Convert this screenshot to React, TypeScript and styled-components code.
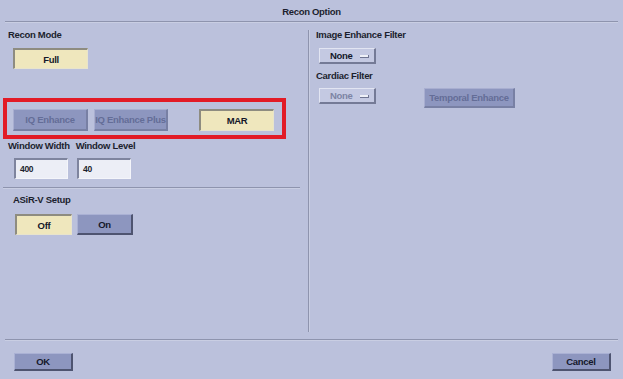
import styled, { createGlobalStyle } from "styled-components";

const GlobalStyle = createGlobalStyle`
  html, body {
    margin: 0;
    padding: 0;
    background: #bbc1dc;
  }
  * {
    box-sizing: border-box;
  }
`;

const Window = styled.div`
  width: 623px;
  height: 379px;
  display: flex;
  flex-direction: column;
  background: #bbc1dc;
  font-family: "Liberation Sans", Arial, sans-serif;
  font-size: 9.5px;
  letter-spacing: -0.3px;
  font-weight: bold;
  color: #1c1f2e;
  overflow: hidden;
`;

const TitleBar = styled.div`
  height: 21px;
  display: flex;
  align-items: center;
  justify-content: center;
  padding-top: 1px;
`;

const Rule = styled.div<{ $inset?: string }>`
  height: 2px;
  margin: ${(p) => p.$inset || "0 5px"};
  background: #8e94ae;
  border-bottom: 1px solid #c9cee3;
`;

const Body = styled.div`
  height: 316px;
  display: flex;
`;

const LeftColumn = styled.div`
  width: 308px;
  display: flex;
  flex-direction: column;
`;

const RightColumn = styled.div`
  flex: 1;
  display: flex;
  flex-direction: column;
  padding-left: 4px;
`;

const Divider = styled.div`
  width: 2px;
  margin: 7px 0;
  background: #8e94ae;
  border-right: 1px solid #c9cee3;
`;

const Label = styled.div<{ $top: number; $left?: number }>`
  margin-top: ${(p) => p.$top}px;
  margin-left: ${(p) => p.$left ?? 0}px;
  line-height: 12px;
  height: 12px;
  white-space: nowrap;
`;

const Row = styled.div<{ $top: number; $left?: number }>`
  display: flex;
  align-items: flex-start;
  margin-top: ${(p) => p.$top}px;
  margin-left: ${(p) => p.$left ?? 0}px;
`;

type Tone = "selected" | "normal" | "disabled";

const Button = styled.div<{ $tone: Tone; $w: number; $h?: number; $ml?: number }>`
  width: ${(p) => p.$w}px;
  height: ${(p) => p.$h ?? 22}px;
  margin-left: ${(p) => p.$ml ?? 0}px;
  display: flex;
  align-items: center;
  justify-content: center;
  white-space: nowrap;
  background: ${(p) => (p.$tone === "selected" ? "#efe7bd" : "#8d96bf")};
  color: ${(p) => (p.$tone === "disabled" ? "#646d97" : "#15182a")};
  border-style: solid;
  border-width: ${(p) => (p.$tone === "selected" ? "2px 1px 1px 2px" : "1px 2px 2px 1px")};
  border-color: ${(p) =>
    p.$tone === "selected"
      ? "#8e8c80 #e8e4cc #e8e4cc #8e8c80"
      : p.$tone === "disabled"
      ? "#a8aed0 #7880a4 #7880a4 #a8aed0"
      : "#aab1d4 #4e5470 #4e5470 #aab1d4"};
`;

const HighlightBox = styled.div`
  margin-top: 29px;
  margin-left: 3px;
  width: 283px;
  height: 41px;
  border: 4px solid #e21b26;
  display: flex;
  align-items: flex-start;
  padding: 7px 0 0 6px;
`;

const Field = styled.div<{ $ml?: number }>`
  width: 54px;
  height: 21px;
  margin-left: ${(p) => p.$ml ?? 0}px;
  background: #eceef6;
  border-style: solid;
  border-width: 2px 1px 1px 2px;
  border-color: #7e849e #f4f5fa #f4f5fa #7e849e;
  display: flex;
  align-items: center;
  padding-left: 4px;
  font-size: 8.5px;
`;

const Select = styled.div<{ $disabled?: boolean }>`
  width: 57px;
  height: 16px;
  margin-left: 3px;
  display: flex;
  align-items: center;
  justify-content: space-between;
  padding: 0 5px 0 10px;
  background: #c4c9e2;
  border-style: solid;
  border-width: 1px 2px 2px 1px;
  border-color: #e2e5f2 #747a96 #747a96 #e2e5f2;
  color: ${(p) => (p.$disabled ? "#7d84a4" : "#15182a")};
`;

const SelectMark = styled.span`
  width: 9px;
  height: 3px;
  margin-top: 2px;
  background: #eef0f8;
  border-bottom: 1px solid #6f7592;
  border-right: 1px solid #6f7592;
`;

const Footer = styled.div`
  flex: 1;
  display: flex;
  justify-content: space-between;
  align-items: flex-start;
  padding: 12px 12px 0 14px;
`;

export default function App() {
  return (
    <>
      <GlobalStyle />
      <Window>
        <TitleBar>Recon Option</TitleBar>
        <Rule />
        <Body>
          <LeftColumn>
            <Label $top={6} $left={8}>Recon Mode</Label>
            <Row $top={7} $left={13}>
              <Button $tone="selected" $w={75} $h={21}>Full</Button>
            </Row>
            <HighlightBox>
              <Button $tone="disabled" $w={75}>IQ Enhance</Button>
              <Button $tone="disabled" $w={74} $ml={6}>IQ Enhance Plus</Button>
              <Button $tone="selected" $w={75} $ml={31}>MAR</Button>
            </HighlightBox>
            <Row $top={1} $left={8}>
              <Label $top={0}>Window Width</Label>
              <Label $top={0} $left={6}>Window Level</Label>
            </Row>
            <Row $top={6} $left={14}>
              <Field>400</Field>
              <Field $ml={9}>40</Field>
            </Row>
            <Rule $inset="8px 8px 0 3px" />
            <Label $top={5} $left={13}>ASiR-V Setup</Label>
            <Row $top={8} $left={15}>
              <Button $tone="selected" $w={57} $h={21}>Off</Button>
              <Button $tone="normal" $w={56} $h={21} $ml={5}>On</Button>
            </Row>
          </LeftColumn>
          <Divider />
          <RightColumn>
            <Label $top={6} $left={2}>Image Enhance Filter</Label>
            <Row $top={7} $left={2}>
              <Select>
                None
                <SelectMark />
              </Select>
            </Row>
            <Label $top={6} $left={2}>Cardiac Filter</Label>
            <Row $top={6} $left={2}>
              <Select $disabled>
                None
                <SelectMark />
              </Select>
              <Button $tone="disabled" $w={91} $h={20} $ml={48}>Temporal Enhance</Button>
            </Row>
          </RightColumn>
        </Body>
        <Rule />
        <Footer>
          <Button $tone="normal" $w={59} $h={18}>OK</Button>
          <Button $tone="normal" $w={59} $h={18}>Cancel</Button>
        </Footer>
      </Window>
    </>
  );
}
